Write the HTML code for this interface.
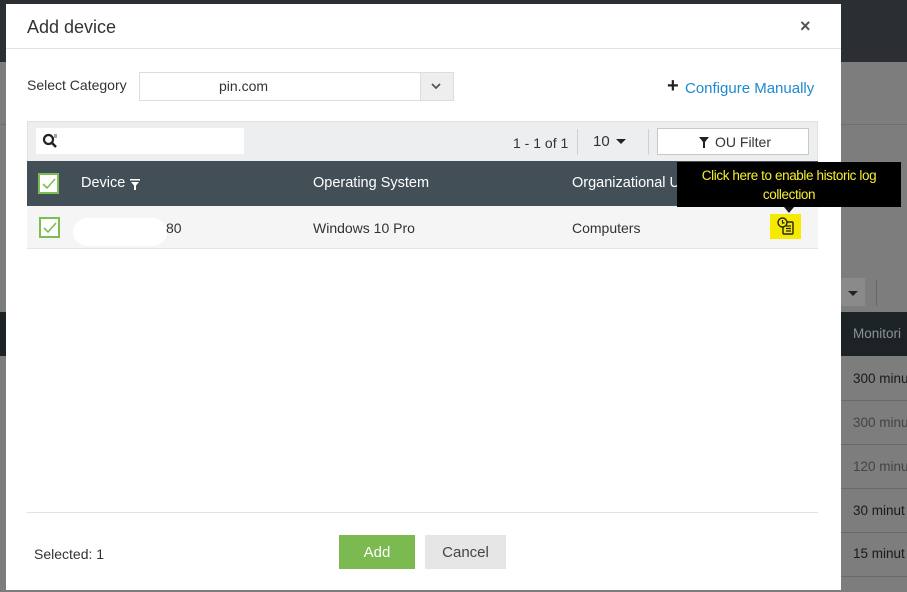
<!DOCTYPE html>
<html><head><meta charset="utf-8"><style>
*{box-sizing:border-box;margin:0;padding:0}
body{width:907px;height:592px;overflow:hidden;position:relative;background:#7d7d7d;font-family:"Liberation Sans",sans-serif;font-size:14px;color:#333}
.abs{position:absolute;white-space:nowrap}
.bgtop{left:0;top:0;width:907px;height:62px;background:#2b2f33}
.bgbar{left:0;top:124px;width:907px;height:1px;background:#6e6e6e}
.bghead{left:0;top:312px;width:907px;height:44px;background:#1d2225}
.bgrow{left:841px;width:66px;height:1px;background:#6a6a6a}
.bgt{left:853px;font-size:13.5px;color:#1a1a1a}
.modal{left:6px;top:4px;width:835px;height:586px;background:#fff}
</style></head><body>
<div class="abs bgtop"></div>
<div class="abs bgbar"></div>
<div class="abs" style="left:841px;top:278px;width:24px;height:28px;background:#8a8a8a"></div>
<div class="abs" style="left:848px;top:291px;border-left:5px solid transparent;border-right:5px solid transparent;border-top:5px solid #222"></div>
<div class="abs" style="left:876px;top:280px;width:1px;height:26px;background:#666"></div>
<div class="abs bghead"></div>
<div class="abs" style="left:853px;top:326px;color:#8a9299;font-size:13.5px">Monitori</div>
<div class="abs bgrow" style="top:400px"></div><div class="abs bgrow" style="top:444px"></div><div class="abs bgrow" style="top:488px"></div><div class="abs bgrow" style="top:532px"></div><div class="abs bgrow" style="top:576px"></div>
<div class="abs bgt" style="top:371px">300 minu</div>
<div class="abs bgt" style="top:415px;color:#444">300 minu</div>
<div class="abs bgt" style="top:459px;color:#444">120 minu</div>
<div class="abs bgt" style="top:503px">30 minut</div>
<div class="abs bgt" style="top:546px">15 minut</div>

<div class="abs modal">
  <div class="abs" style="left:21px;top:13px;font-size:18px;color:#333">Add device</div>
  <div class="abs" style="left:794px;top:12px;font-size:18px;color:#555;font-weight:bold">×</div>
  <div class="abs" style="left:0;top:44px;width:835px;height:1px;background:#e2e2e2"></div>

  <div class="abs" style="left:21px;top:73px;font-size:14px">Select Category</div>
  <div class="abs" style="left:133px;top:68px;width:315px;height:29px;border:1px solid #ddd"></div>
  <div class="abs" style="left:134px;top:69px;width:80px;height:27px;background:#fff"></div>
  <div class="abs" style="left:213px;top:74px;font-size:14px">pin.com</div>
  <div class="abs" style="left:414px;top:69px;width:33px;height:27px;background:#eee;border-left:1px solid #ddd"></div>
  <svg class="abs" style="left:424px;top:78px" width="12" height="9"><path d="M2 2 L6 6 L10 2" stroke="#555" stroke-width="1.8" fill="none"/></svg>

  <div class="abs" style="left:661px;top:71px;font-size:20px;font-weight:bold;color:#222">+</div>
  <div class="abs" style="left:679px;top:76px;font-size:15px;color:#1c8ad0">Configure Manually</div>

  <div class="abs" style="left:21px;top:117px;width:791px;height:41px;background:#eceeef;border:1px solid #e0e2e3"></div>
  <div class="abs" style="left:30px;top:124px;width:208px;height:26px;background:#fff"></div>
  <svg class="abs" style="left:36px;top:129px" width="18" height="16"><circle cx="6.5" cy="6.5" r="4.5" stroke="#222" stroke-width="2.2" fill="none"/><path d="M10 10 L14 14" stroke="#222" stroke-width="2.5"/><path d="M12 2h3M12 4h3" stroke="#444" stroke-width="1"/></svg>
  <div class="abs" style="left:507px;top:131px;font-size:14px">1 - 1 of 1</div>
  <div class="abs" style="left:571px;top:125px;width:1px;height:26px;background:#d0d0d0"></div>
  <div class="abs" style="left:587px;top:129px;font-size:15px">10</div>
  <div class="abs" style="left:610px;top:135px;border-left:5px solid transparent;border-right:5px solid transparent;border-top:5px solid #222"></div>
  <div class="abs" style="left:642px;top:125px;width:1px;height:26px;background:#d0d0d0"></div>
  <div class="abs" style="left:651px;top:124px;width:152px;height:27px;background:#fff;border:1px solid #c8c8c8"></div>
  <svg class="abs" style="left:693px;top:133px" width="10" height="11"><path d="M0 0H10L6 5V11H4V5Z" fill="#222"/></svg>
  <div class="abs" style="left:709px;top:130px;font-size:14px">OU Filter</div>

  <div class="abs" style="left:21px;top:157px;width:791px;height:45px;background:#434f57"></div>
  <div class="abs" style="left:32px;top:169px;width:21px;height:21px;background:#fff;border:2px solid #7cbd56"></div>
  <svg class="abs" style="left:36px;top:173px" width="14" height="13"><path d="M1 7 L5 11 L13 2" stroke="#7cbd56" stroke-width="1.6" fill="none"/></svg>
  <div class="abs" style="left:75px;top:171px;font-size:14.5px;color:#fff">Device</div>
  <svg class="abs" style="left:124px;top:175px" width="10" height="11"><path d="M0 0H10V1.5H0ZM1 3H9L6 6.5V11H4V6.5Z" fill="#fff"/></svg>
  <div class="abs" style="left:307px;top:171px;font-size:14.5px;color:#fff">Operating System</div>
  <div class="abs" style="left:566px;top:171px;font-size:14.5px;color:#fff">Organizational Unit</div>

  <div class="abs" style="left:21px;top:202px;width:791px;height:43px;background:#f5f5f5;border-bottom:1px solid #e6e6e6"></div>
  <div class="abs" style="left:33px;top:213px;width:21px;height:21px;background:#fff;border:2px solid #7cbd56"></div>
  <svg class="abs" style="left:37px;top:217px" width="14" height="13"><path d="M1 7 L5 11 L13 2" stroke="#7cbd56" stroke-width="1.6" fill="none"/></svg>
  <div class="abs" style="left:67px;top:214px;width:94px;height:28px;background:#fff;border-radius:14px"></div>
  <div class="abs" style="left:160px;top:216px;font-size:14px">80</div>
  <div class="abs" style="left:307px;top:216px;font-size:14px">Windows 10 Pro</div>
  <div class="abs" style="left:566px;top:216px;font-size:14px">Computers</div>

  <div class="abs" style="left:671px;top:158px;width:224px;height:45px;background:#000"></div>
  <div class="abs" style="left:671px;top:162px;width:224px;text-align:center;color:#f7f02a;font-size:13.5px;line-height:19px;letter-spacing:-0.4px">Click here to enable historic log<br>collection</div>
  <div class="abs" style="left:778px;top:203px;border-left:5px solid transparent;border-right:5px solid transparent;border-top:6px solid #111"></div>
  <div class="abs" style="left:764px;top:210px;width:31px;height:25px;background:#f6ea00"></div>
  <svg class="abs" style="left:771px;top:213px" width="18" height="19"><rect x="6" y="5" width="10" height="12" rx="1" fill="#f6ea00" stroke="#222" stroke-width="1.4"/><path d="M9 9h5M9 11.5h5M9 14h5" stroke="#222" stroke-width="1.2"/><circle cx="5.5" cy="5.5" r="4.5" fill="#f6ea00" stroke="#222" stroke-width="1.4"/><path d="M5.5 3v3h2" stroke="#222" stroke-width="1.2" fill="none"/></svg>

  <div class="abs" style="left:21px;top:508px;width:791px;height:1px;background:#e2e2e2"></div>
  <div class="abs" style="left:28px;top:542px;font-size:14px">Selected: 1</div>
  <div class="abs" style="left:333px;top:531px;width:76px;height:34px;background:#7aba50;color:#fff;font-size:15px;text-align:center;line-height:36px">Add</div>
  <div class="abs" style="left:419px;top:531px;width:81px;height:34px;background:#e6e6e6;color:#444;font-size:15px;text-align:center;line-height:36px">Cancel</div>
</div>
</body></html>
